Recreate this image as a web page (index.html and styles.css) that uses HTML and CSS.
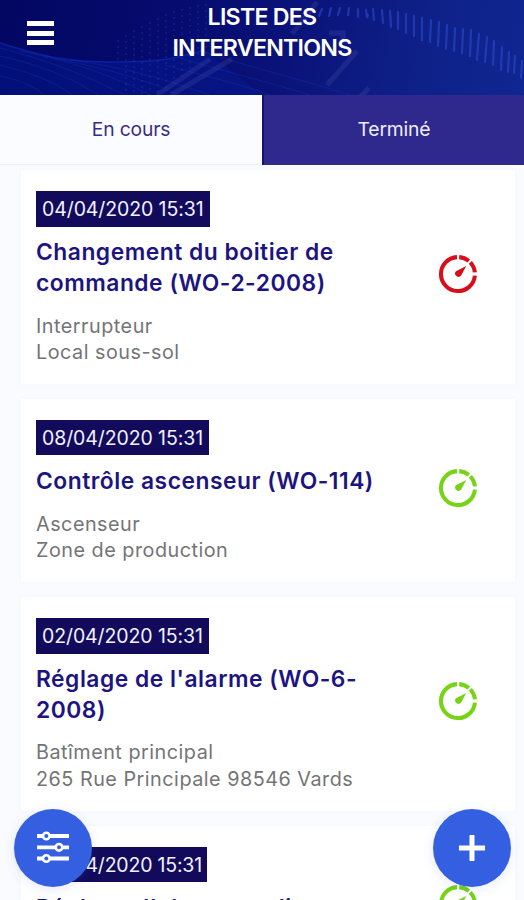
FILE: index.html
```html
<!DOCTYPE html>
<html lang="fr">
<head>
<meta charset="utf-8">
<title>Liste des interventions</title>
<link rel="stylesheet" href="styles.css">
</head>
<body>
<svg class="defs" aria-hidden="true">
  <symbol id="gauge" viewBox="0 0 40 40">
    <g fill="none" stroke="currentColor" stroke-width="4.1">
      <path d="M19 3.1A17 17 0 1 0 36.9 21.6"/>
      <path d="M21.2 3.1A17 17 0 0 1 30.8 7"/>
      <path d="M32.3 8.3A17 17 0 0 1 36.9 18.4"/>
    </g>
    <path fill="currentColor" d="M28.2 12 23.2 21.6A3.4 3.4 0 1 1 18 17.2Z"/>
  </symbol>
</svg>
<div class="app">
  <header class="header">
    <svg class="header-art" viewBox="0 0 524 95" preserveAspectRatio="none" aria-hidden="true">
      <path class="wave" d="M0 43C45 57 65 62 115 62S175 58 205 50L262 95H0Z"/>
      <path class="wave-edge" d="M0 43C45 57 65 62 115 62S175 58 205 50"/>
      <g class="mesh">
        <path d="M0 48C55 62 90 78 125 95M0 56C45 66 75 80 98 95M0 65C35 74 55 82 72 95M0 76C20 80 34 86 44 95M20 51C75 62 115 77 150 95M42 56C95 66 140 77 180 95M70 60C120 66 165 79 210 95"/>
        <path d="M200 50C240 65 290 76 350 95M180 58C220 70 260 80 310 95M165 65C205 76 240 84 270 95"/>
      </g>
      <path class="dots" d="M118 40V64M126 35V95M134 30V95M142 26V95M150 22V95M158 18V92M166 14V88M174 11V82M182 9V76M190 7V70M198 5V60M206 4V54"/>
      <path class="comb" d="M322 9l-3 7M331 8l-2 8M340 8l-2 7M349 8l-1 7M358 9v8M366 10l1 8 1-3M373 9l1 11M382 10l1 13M390 11l1 16M398 12v17M406 14v19M414 16v20M422 18v22M431 20l-1 22M439 22l-1 24M447 25l-1 24M455 28l-1 23M463 29l-1 24M471 30l-1 26M479 34l-2 26M487 37l-2 25M494 41l-1 24M502 47l-1 23M509 52l-1 20M515 56l-1 17M522 61l-1 17"/>
      <path class="streak" d="M210 59l-53 36M232 59l-61 36M329 33h14v10M357 51l-30 34M369 88l-9 9M317 2l-25 32"/>
    </svg>
    <button class="menu" aria-label="Menu"><span></span><span></span><span></span></button>
    <h1 class="heading">LISTE DES<br>INTERVENTIONS</h1>
  </header>
  <nav class="tabs">
    <a class="tab">En cours</a>
    <a class="tab tab-selected">Terminé</a>
  </nav>
  <main class="list">
    <article class="card">
      <div class="info">
        <time class="date date-wide">04/04/2020 15:31</time>
        <h2 class="title">Changement du boitier de commande (WO-2-2008)</h2>
        <p class="place">Interrupteur<br>Local sous-sol</p>
      </div>
      <svg class="gauge late"><use href="#gauge"/></svg>
    </article>
    <article class="card">
      <div class="info">
        <time class="date">08/04/2020 15:31</time>
        <h2 class="title">Contrôle ascenseur (WO-114)</h2>
        <p class="place">Ascenseur<br>Zone de production</p>
      </div>
      <svg class="gauge"><use href="#gauge"/></svg>
    </article>
    <article class="card">
      <div class="info">
        <time class="date">02/04/2020 15:31</time>
        <h2 class="title">Réglage de l'alarme (WO-6-2008)</h2>
        <p class="place">Batîment principal<br>265 Rue Principale 98546 Vards</p>
      </div>
      <svg class="gauge"><use href="#gauge"/></svg>
    </article>
    <article class="card card-last">
      <div class="info">
        <time class="date date-narrow">04/04/2020 15:31</time>
        <h2 class="title">Réglage d'alarme audio</h2>
      </div>
      <svg class="gauge"><use href="#gauge"/></svg>
    </article>
  </main>
  <button class="fab fab-filter" aria-label="Filtrer">
    <svg width="34" height="34" viewBox="0 0 34 34" fill="none" stroke="#fff">
      <path stroke-width="3.8" d="M1 5H33M1 16.3H33M1 27.5H33"/>
      <g fill="#345fe1" stroke-width="2.6"><circle cx="10.3" cy="5" r="3.3"/><circle cx="23" cy="16.3" r="3.3"/><circle cx="10.3" cy="27.5" r="3.3"/></g>
    </svg>
  </button>
  <button class="fab fab-add" aria-label="Ajouter">
    <svg width="28" height="28" viewBox="0 0 28 28" stroke="#fff" stroke-width="5"><path d="M14 1V27M1 14H27"/></svg>
  </button>
</div>
</body>
</html>
```
FILE: styles.css
```css
* { box-sizing: border-box; }
body { margin: 0; font-family: Inter, "Liberation Sans", sans-serif; }
button { border: 0; padding: 0; background: none; }
.defs { position: absolute; width: 0; height: 0; }
.app { position: relative; height: 900px; overflow: hidden; background: #f9fbff; }

.header {
  position: relative;
  height: 95px;
  display: grid;
  grid-template-columns: 80px 1fr 80px;
  background: linear-gradient(100deg, #030762 0%, #050a6c 28%, #0a1379 55%, #0e2189 80%, #102690 100%);
}
.header-art { position: absolute; inset: 0; width: 100%; height: 100%; }
.wave { fill: #0720a0; opacity: .35; }
.wave-edge { fill: none; stroke: #0d2fc0; stroke-width: 1.5; opacity: .6; }
.mesh { fill: none; stroke: #1b3cc0; stroke-width: 1; opacity: .3; }
.dots { stroke: #2448d0; stroke-width: 1.6; stroke-dasharray: 2 4; opacity: .3; }
.comb { stroke: #2c4ad0; stroke-width: 2.2; stroke-linecap: round; opacity: .6; fill: none; }
.streak { fill: none; stroke: #5c5bb0; stroke-width: 5; opacity: .22; }
.menu { position: relative; width: 27px; height: 24px; margin: 21px 0 0 27px; display: flex; flex-direction: column; justify-content: space-between; }
.menu span { display: block; width: 100%; height: 5px; background: #fff; }
.heading { position: relative; margin: 2px 0 0; text-align: center; color: #fff; font-size: 23.2px; line-height: 30.5px; font-weight: 600; letter-spacing: -.75px; }

.tabs { height: 70px; display: grid; grid-template-columns: 1fr 1fr; border-bottom: 1px solid #eceef3; background: #fafcff; }
.tab { display: flex; align-items: center; justify-content: center; height: 70px; padding-bottom: 2px; color: #3a2c86; font-size: 19.3px; letter-spacing: -.15px; }
.tab-selected { background: #2f298d; color: #f0edff; border-left: 2px solid #17107a; }

.list { padding: 5.2px 9px 0 21px; display: flex; flex-direction: column; gap: 15px; }
.card { flex: none; display: flex; align-items: center; justify-content: space-between; padding: 21px 37px 18.4px 15px; background: #fff; box-shadow: 0 0 5px #f3f6fd; }
.card-last { height: 155px; align-items: flex-start; }
.card-last .gauge { margin-top: 37px; }
.info { width: 350px; }
.date { display: block; width: 173px; height: 35.5px; padding-left: 6px; background: #120b5c; color: #f3f1ff; font-size: 19.5px; line-height: 36px; letter-spacing: -.1px; white-space: nowrap; }
.date-wide { width: 174px; }
.date-narrow { width: 171px; letter-spacing: -.2px; }
.title { margin: 10.5px 0 0; color: #1c1481; font-size: 22.8px; line-height: 30.7px; font-weight: 600; letter-spacing: .52px; }
.place { margin: 14px 0 0; color: #747476; font-size: 19.8px; line-height: 26.5px; letter-spacing: .5px; }
.gauge { flex: none; width: 40px; height: 40px; margin-top: -8px; color: #76d316; }
.late { color: #d5101b; }

.fab { position: absolute; top: 809px; width: 78px; height: 78px; border-radius: 50%; display: flex; align-items: center; justify-content: center; background: #345fe1; box-shadow: 0 2px 12px #314fc51f; }
.fab-filter { left: 14px; }
.fab-add { left: 433px; }
```
